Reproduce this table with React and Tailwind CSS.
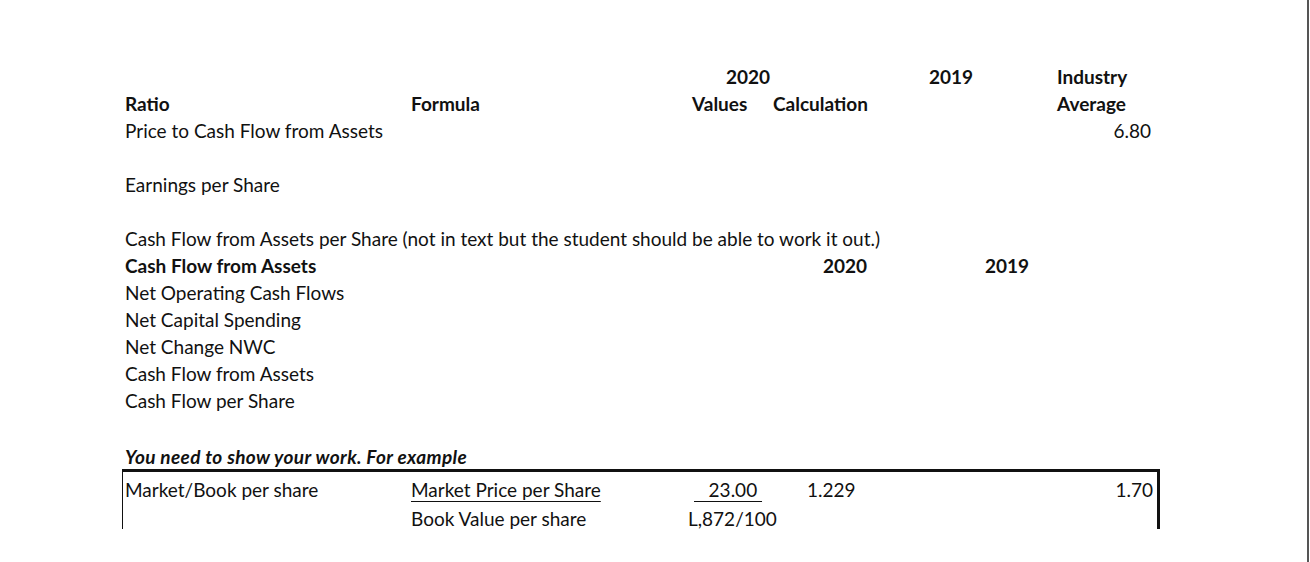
import React from "react";

const Row = ({ children, className = "" }) => (
  <div className={"flex h-[27px] items-center whitespace-pre " + className}>{children}</div>
);

export default function App() {
  return (
    <div
      className="flex h-[562px] w-[1310px] bg-white text-[#111] text-[19px] leading-[27px]"
      style={{ fontFamily: "Lato, 'Open Sans', sans-serif" }}
    >
      <div className="flex-1 pl-[125px] pt-[63px]">
        {/* header row 0 */}
        <Row className="font-bold">
          <div className="w-[286px]" />
          <div className="w-[270px]" />
          <div className="w-[89px] text-right">2020</div>
          <div className="w-[110px]" />
          <div className="w-[120px] pl-[49px]">2019</div>
          <div className="w-[160px] pl-[57px]">Industry</div>
        </Row>
        <Row className="font-bold">
          <div className="w-[286px]">Ratio</div>
          <div className="w-[270px]">Formula</div>
          <div className="w-[89px] pl-[11px]">Values</div>
          <div className="w-[110px] pl-[3px]">Calculation</div>
          <div className="w-[120px]" />
          <div className="w-[160px] pl-[57px]">Average</div>
        </Row>
        <Row>
          <div className="w-[286px]">Price to Cash Flow from Assets</div>
          <div className="w-[270px]" />
          <div className="w-[89px]" />
          <div className="w-[110px]" />
          <div className="w-[120px]" />
          <div className="w-[151px] text-right">6.80</div>
        </Row>
        <Row />
        <Row>Earnings per Share</Row>
        <Row />
        <Row>Cash Flow from Assets per Share (not in text but the student should be able to work it out.)</Row>
        <Row className="font-bold">
          <div className="w-[286px]">Cash Flow from Assets</div>
          <div className="w-[270px]" />
          <div className="w-[89px]" />
          <div className="w-[97px] text-right">2020</div>
          <div className="w-[13px]" />
          <div className="w-[120px] pl-[105px] overflow-visible">2019</div>
        </Row>
        <Row>Net Operating Cash Flows</Row>
        <Row>Net Capital Spending</Row>
        <Row>Net Change NWC</Row>
        <Row>Cash Flow from Assets</Row>
        <Row>Cash Flow per Share</Row>
        <Row />
        <div className="mt-[3px] h-[25px] flex items-center font-bold italic tracking-[0.35px]">
          You need to show your work. For example
        </div>
        <div className="-ml-[3px] w-[1038px] h-[60px] border-t-[3px] border-l border-r-[3px] border-[#111] pl-[2px] pt-[3px]">
          <div className="flex h-[29px] items-center whitespace-pre">
            <div className="w-[286px]">Market/Book per share</div>
            <div className="w-[283px]">
              <span className="underline decoration-1 underline-offset-[4px]">Market Price per Share</span>
            </div>
            <div className="w-[68px] text-right">
              <span className="underline decoration-1 underline-offset-[4px]">{"   23.00 "}</span>
            </div>
            <div className="w-[45px]" />
            <div className="w-[200px]">1.229</div>
            <div className="flex-1 text-right pr-[4px]">1.70</div>
          </div>
          <div className="flex h-[29px] items-center whitespace-pre">
            <div className="w-[286px]" />
            <div className="w-[277px]">Book Value per share</div>
            <div className="w-[74px] text-right pr-[2px]">L,872/100</div>
          </div>
        </div>
      </div>
      <div className="w-[2px] bg-[#555] mr-[1px]" />
    </div>
  );
}
